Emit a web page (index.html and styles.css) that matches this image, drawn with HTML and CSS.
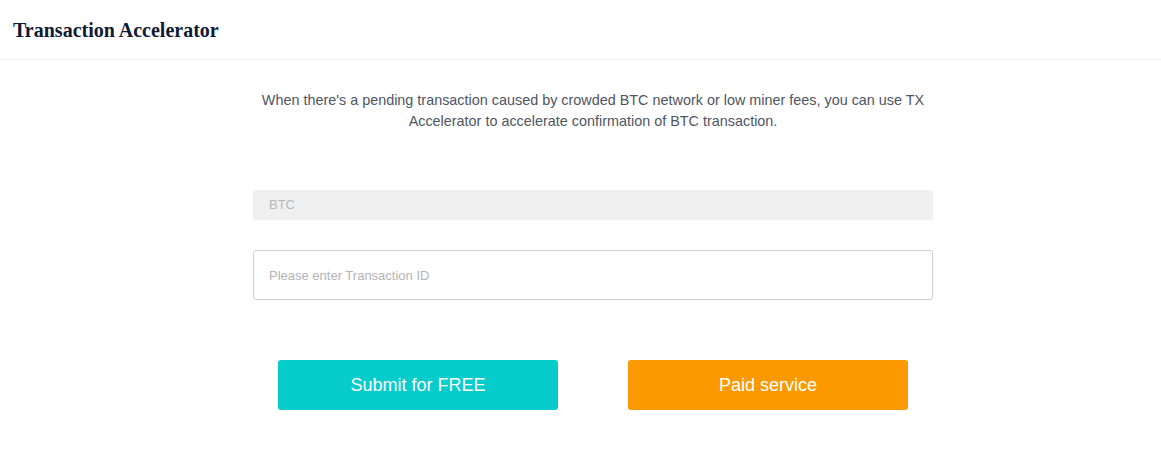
FILE: index.html
```html
<!DOCTYPE html>
<html lang="en">
<head>
    <meta charset="UTF-8">
    <title>Transaction Accelerator</title>
    <link rel="stylesheet" href="styles.css">
</head>
<body>

<header class="page-header">
    <h1>Transaction Accelerator</h1>
</header>

<div class="main">
    <div class="accelerator">
        <p class="intro">When there's a pending transaction caused by crowded BTC network or low miner fees, you can use TX Accelerator to accelerate confirmation of BTC transaction.</p>

        <div class="coin-field">BTC</div>

        <input type="text" class="txid-input" placeholder="Please enter Transaction ID">

        <div class="actions">
            <button class="btn btn-free">Submit for FREE</button>
            <button class="btn btn-paid">Paid service</button>
        </div>
    </div>
</div>

</body>
</html>
```

FILE: styles.css
```css
* {
    margin: 0;
    padding: 0;
    box-sizing: border-box;
}

body {
    font-family: "Liberation Sans", Arial, sans-serif;
    background-color: #fff;
    color: #333;
}

.page-header {
    height: 60px;
    padding: 19px 13px 0;
    border-bottom: 1px solid #f0f0f0;
}

.page-header h1 {
    font-family: "Liberation Serif", "Times New Roman", serif;
    font-size: 20px;
    font-weight: 700;
    color: #101a33;
    line-height: 22px;
}

.main {
    padding-left: 25px;
}

.accelerator {
    width: 680px;
    margin: 0 auto;
}

.intro {
    margin-top: 30px;
    padding: 0 4px;
    font-size: 14.4px;
    line-height: 21px;
    color: #4f5563;
    text-align: center;
}

.coin-field {
    margin-top: 58px;
    height: 30px;
    line-height: 30px;
    padding: 0 16px;
    background-color: #f0f0f0;
    border-radius: 3px;
    font-size: 13px;
    color: #b8b8b8;
}

.txid-input {
    display: block;
    width: 100%;
    height: 50px;
    margin-top: 30px;
    padding: 0 15px;
    border: 1px solid #cfcfcf;
    border-radius: 3px;
    font-family: inherit;
    font-size: 13px;
    color: #333;
    outline: none;
}

.txid-input::placeholder {
    color: #b3b3b8;
}

.actions {
    display: flex;
    justify-content: center;
    gap: 70px;
    margin-top: 60px;
}

.btn {
    width: 280px;
    height: 50px;
    border: none;
    border-radius: 3px;
    font-family: inherit;
    font-size: 18px;
    color: #fff;
    cursor: pointer;
}

.btn-free {
    background-color: #06cccc;
}

.btn-paid {
    background-color: #fb9a00;
}
```
